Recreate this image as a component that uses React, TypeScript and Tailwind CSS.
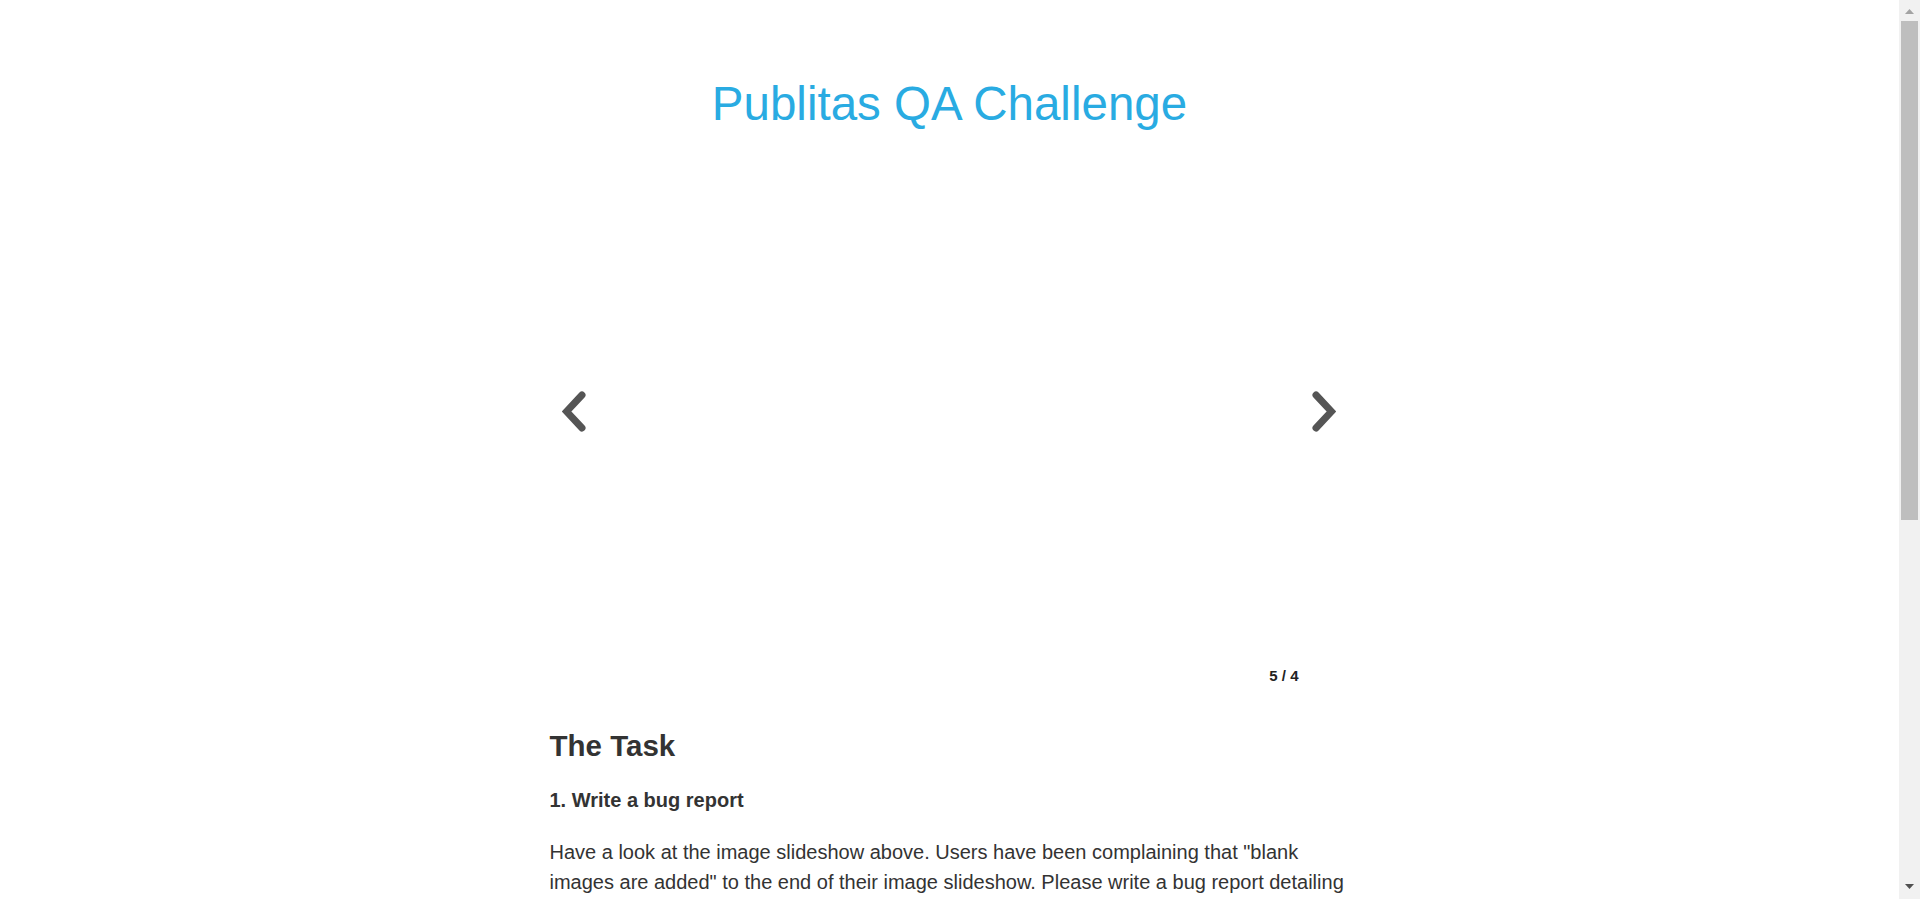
const SLIDE_COUNT = 4;

function Chevron({ dir }: { dir: 'left' | 'right' }) {
  const points = dir === 'left' ? '20,4 4.5,20.5 20,37' : '4,4 19.5,20.5 4,37';
  return (
    <svg width="24" height="41" viewBox="0 0 24 41" className="block">
      <polyline
        points={points}
        fill="none"
        stroke="#555555"
        strokeWidth="7"
        strokeLinecap="round"
        strokeLinejoin="miter" />
    </svg>);
}

// Browser-style vertical scrollbar, as it shows in the page's window
function Scrollbar() {
  return (
    <div className="w-[21px] h-full bg-[#f1f1f1] flex flex-col items-center shrink-0">
      <div className="h-[17px] w-full flex items-center justify-center pt-[6px]">
        <svg width="9" height="5" viewBox="0 0 9 5">
          <polygon points="0,5 4.5,0 9,5" fill="#a3a3a3" />
        </svg>
      </div>
      <div className="mt-[4px] w-[17px] h-[499px] bg-[#bebebe]" />
      <div className="flex-1" />
      <div className="h-[17px] w-full flex items-start justify-center pt-[2px]">
        <svg width="9" height="5" viewBox="0 0 9 5">
          <polygon points="0,0 9,0 4.5,5" fill="#505050" />
        </svg>
      </div>
    </div>);
}

export default function App() {
  const current = 5;
  return (
    <div className="h-[899px] flex overflow-hidden bg-white font-['Liberation_Sans',Arial,sans-serif] text-[#333333]">
      <main className="flex-1 overflow-hidden">
        <div className="w-[800px] mx-auto pt-[78px] pb-16">
          <h1 className="text-center text-[47.5px] leading-[1.1] font-normal text-[#29abe2]">
            Publitas QA Challenge
          </h1>

          {/* Slideshow */}
          <div className="mt-[31px] h-[500px] flex items-center justify-between pl-[12px] pr-[14px]">
            <button aria-label="Previous slide" className="cursor-pointer">
              <Chevron dir="left" />
            </button>
            <button aria-label="Next slide" className="cursor-pointer">
              <Chevron dir="right" />
            </button>
          </div>
          <div className="mt-[5px] flex justify-end pr-[51px]">
            <span className="text-[15px] leading-[20px] font-bold text-[#222222]">
              {current} / {SLIDE_COUNT}
            </span>
          </div>

          <h2 className="mt-[43px] text-[29.5px] leading-[33px] font-bold">The Task</h2>
          <h4 className="mt-[27px] text-[20px] leading-[22px] font-bold">1. Write a bug report</h4>
          <p className="mt-[26px] text-[20px] leading-[30px]">
            Have a look at the image slideshow above. Users have been complaining that "blank
            images are added" to the end of their image slideshow. Please write a bug report detailing
            the problem, the steps to reproduce it and what you would expect to happen instead.
          </p>
        </div>
      </main>
      <Scrollbar />
    </div>);
}
